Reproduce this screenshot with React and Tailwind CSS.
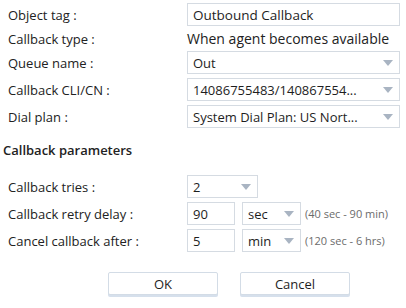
import React from "react";

function Caret() {
  return (
    <svg width="10" height="6" viewBox="0 0 10 6" className="shrink-0">
      <path d="M0 0 L10 0 L5 6 Z" fill="#a9b4c2" />
    </svg>
  );
}

function Select({ value, className }) {
  return (
    <div
      className={`h-[23px] border border-[#d5dbe2] bg-white flex items-center justify-between pl-[5px] pr-[6px] text-[#1e1e1e] ${className}`}
    >
      <span className="whitespace-nowrap leading-[18px]">{value}</span>
      <Caret />
    </div>
  );
}

function Input({ value, className }) {
  return (
    <div
      className={`h-[23px] border border-[#d5dbe2] bg-white flex items-center pl-[5px] text-[#1e1e1e] ${className}`}
    >
      {value}
    </div>
  );
}

function Row({ label, children, className = "" }) {
  return (
    <div className={`flex items-center ${className}`}>
      <div className="w-[187px] shrink-0 pl-[8px] text-[#222]">{label}</div>
      {children}
    </div>
  );
}

export default function App() {
  return (
    <div
      className="w-[406px] h-[308px] bg-white text-[13px] leading-[18px] overflow-hidden"
      style={{ fontFamily: '"Open Sans", "Noto Sans", sans-serif' }}
    >
      <div className="pt-[3px] flex flex-col">
        <Row label="Object tag :">
          <Input value="Outbound Callback" className="w-[213px] text-[13.5px]" />
        </Row>
        <Row label="Callback type :" className="h-[25px]">
          <span className="text-[#222] text-[14px]">When agent becomes available</span>
        </Row>
        <Row label="Queue name :">
          <Select value="Out" className="w-[213px]" />
        </Row>
        <Row label="Callback CLI/CN :" className="mt-[4px]">
          <Select value="14086755483/140867554..." className="w-[213px]" />
        </Row>
        <Row label="Dial plan :" className="mt-[4px]">
          <Select value="System Dial Plan: US Nort..." className="w-[213px]" />
        </Row>
      </div>

      <div className="pl-[3px] mt-[13px] font-semibold text-[#222] h-[16px]">
        Callback parameters
      </div>

      <div className="mt-[18px] flex flex-col gap-[4px]">
        <Row label="Callback tries :">
          <Select value="2" className="w-[71px]" />
        </Row>
        <Row label="Callback retry delay :">
          <Input value="90" className="w-[48px]" />
          <Select value="sec" className="w-[59px] ml-[7px]" />
          <span className="ml-[4px] text-[11px] text-[#6b6b6b] whitespace-nowrap">(40 sec - 90 min)</span>
        </Row>
        <Row label="Cancel callback after :">
          <Input value="5" className="w-[48px]" />
          <Select value="min" className="w-[59px] ml-[7px]" />
          <span className="ml-[4px] text-[11px] text-[#6b6b6b] whitespace-nowrap">(120 sec - 6 hrs)</span>
        </Row>
      </div>

      <div className="mt-[20px] flex gap-[22px] pl-[108px]">
        <button className="w-[110px] h-[23px] bg-white border border-[#d3dce6] rounded-[2px] shadow-[0_2px_0_#d6e0ec] text-[#1e1e1e]">
          OK
        </button>
        <button className="w-[110px] h-[23px] bg-white border border-[#d3dce6] rounded-[2px] shadow-[0_2px_0_#d6e0ec] text-[#1e1e1e]">
          Cancel
        </button>
      </div>
    </div>
  );
}
